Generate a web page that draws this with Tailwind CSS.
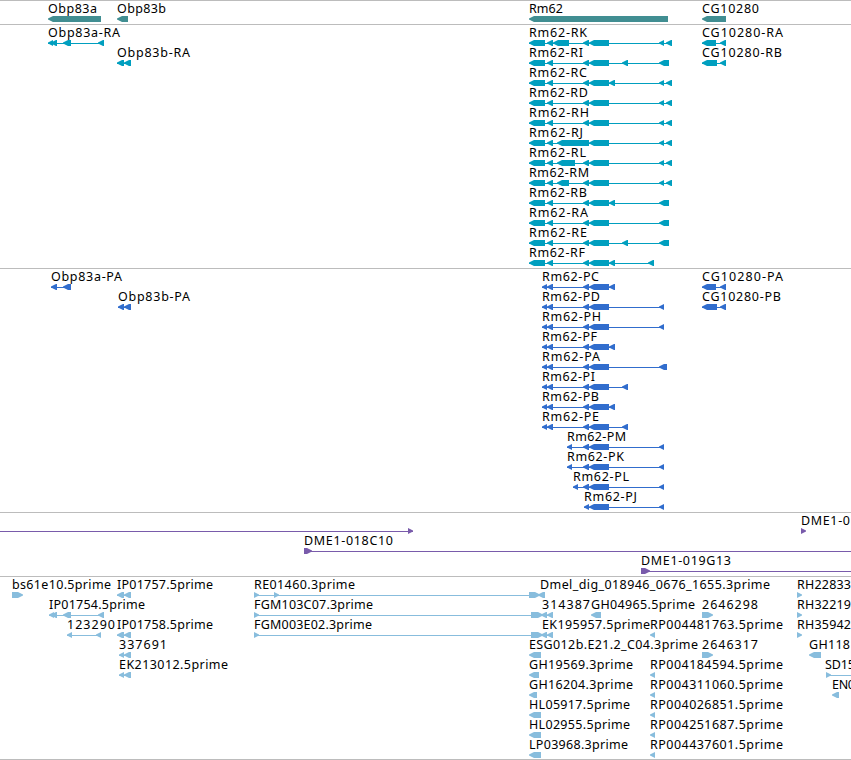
<!DOCTYPE html>
<html lang="en">
<head>
  <meta charset="UTF-8" />
  <meta name="viewport" content="width=device-width, initial-scale=1.0"/>
  <title>Genome Browser</title>
  <script src="https://cdn.jsdelivr.net/npm/@tailwindcss/browser@4"></script>
</head>
<body class="bg-white overflow-hidden">

  <main class="flex flex-col w-[851px] h-[760px] overflow-hidden border-b border-[#bcbcbc] font-['Noto_Sans','DejaVu_Sans',sans-serif] text-[12.5px] text-black">
    <!-- Genes -->
    <section class="h-6 shrink-0 border-t border-[#bcbcbc]">
      <svg id="genes" class="block w-full h-full fill-[#418e92]"></svg>
    </section>
    <!-- Transcripts -->
    <section class="h-[244px] shrink-0 border-t border-[#bcbcbc]">
      <svg id="transcripts" class="block w-full h-full fill-[#009fbf]"></svg>
    </section>
    <!-- Proteins -->
    <section class="h-[244px] shrink-0 border-t border-[#bcbcbc]">
      <svg id="proteins" class="block w-full h-full fill-[#316dcd]"></svg>
    </section>
    <!-- Clones -->
    <section class="h-16 shrink-0 border-t border-[#bcbcbc]">
      <svg id="clones" class="block w-full h-full fill-[#795bab]"></svg>
    </section>
    <!-- ESTs -->
    <section class="h-[183px] shrink-0 border-t border-[#bcbcbc]">
      <svg id="ests" class="block w-full h-full fill-[#88bddd]"></svg>
    </section>
  </main>

  <script>
    const NS = "http://www.w3.org/2000/svg";
    const ROW = 20;

    // feature: [row, label, label x, label width, blocks, strand]
    const head = [[529, 545], [547, 553]];
    const mid = [[583, 589], [589, 609]];
    const tail = [[659, 664], [666, 672]];
    const rm = (row, name, blocks, w = 58) => [row, "Rm62-" + name, 529, w, blocks, -1];
    const phead = [[542, 547], [547, 553]];
    const pm = (row, name, x, blocks, w = 57) => [row, "Rm62-" + name, x, w, blocks, -1];
    const rp = (row, num) => [row, `RP${num}.5prime`, 650, 133, [[650, 655]], -1];

    const tracks = {
      genes: [
        [0, "Obp83a", 48, 49, [[48, 101]], -1],
        [0, "Obp83b", 117, 49, [[117, 128]], -1],
        [0, "Rm62", 529, 34, [[529, 668]], -1],
        [0, "CG10280", 702, 57, [[702, 726]], -1],
      ],
      transcripts: [
        [0, "Obp83a-RA", 48, 72, [[48, 53], [51, 57], [63, 71], [98, 104]], -1],
        [1, "Obp83b-RA", 117, 73, [[117, 124], [124, 131]], -1],
        rm(0, "RK", [...head, [553, 569], ...mid, ...tail]),
        rm(1, "RI", [...head, ...mid, [622, 628], [659, 669]], 54),
        rm(2, "RC", [...head, ...mid, [609, 615], ...tail]),
        rm(3, "RD", [...head, ...mid, ...tail], 59),
        rm(4, "RH", [...head, ...mid, ...tail], 60),
        rm(5, "RJ", [...head, [557, 589], [589, 609], ...tail], 54),
        rm(6, "RL", [...head, [557, 575], ...mid, ...tail], 57),
        rm(7, "RM", [...head, [557, 569], ...mid, ...tail], 60),
        rm(8, "RB", [...head, ...mid, [609, 615], [659, 669]]),
        rm(9, "RA", [...head, ...mid, [659, 669]], 59),
        rm(10, "RE", [...head, ...mid, [622, 628], [659, 669]], 58),
        rm(11, "RF", [...head, ...mid, [609, 615], [648, 654]], 56),
        [0, "CG10280-RA", 702, 81, [[702, 716], [720, 726]], -1],
        [1, "CG10280-RB", 702, 80, [[702, 717], [720, 726]], -1],
      ],
      proteins: [
        [0, "Obp83a-PA", 51, 71, [[51, 57], [63, 71]], -1],
        [1, "Obp83b-PA", 118, 72, [[118, 124], [124, 131]], -1],
        pm(0, "PC", 542, [...phead, ...mid, [609, 615]]),
        pm(1, "PD", 542, [...phead, ...mid, [659, 664]], 58),
        pm(2, "PH", 542, [...phead, ...mid, [659, 664]], 59),
        pm(3, "PF", 542, [...phead, ...mid, [609, 615]], 55),
        pm(4, "PA", 542, [...phead, ...mid, [659, 667]], 58),
        pm(5, "PI", 542, [...phead, ...mid, [622, 628]], 53),
        pm(6, "PB", 542, [...phead, ...mid, [609, 615]]),
        pm(7, "PE", 542, [...phead, ...mid, [622, 628]]),
        pm(8, "PM", 567, [[567, 572], ...mid, [659, 664]], 59),
        pm(9, "PK", 567, [[567, 572], ...mid, [659, 664]]),
        pm(10, "PL", 573, [[573, 578], ...mid, [659, 664]], 56),
        pm(11, "PJ", 584, [[584, 589], [589, 609], [659, 664]], 53),
        [0, "CG10280-PA", 702, 81, [[702, 716], [720, 726]], -1],
        [1, "CG10280-PB", 702, 79, [[702, 717], [720, 726]], -1],
      ],
      clones: [
        [0, "", 0, 0, [[-10, 0], [408, 413]], 1],
        [1, "DME1-018C10", 304, 89, [[304, 312], [860, 870]], 1],
        [2, "DME1-019G13", 641, 90, [[641, 650], [860, 870]], 1],
        [0, "DME1-0", 801, 49, [[801, 806]], 1],
      ],
      ests: [
        [0, "bs61e10.5prime", 12, 99, [[12, 23]], 1],
        [1, "IP01754.5prime", 49, 96, [[49, 54], [51, 57], [63, 71], [98, 104]], -1],
        [2, "123290", 67, 48, [[67, 72], [96, 101]], -1],
        [0, "IP01757.5prime", 117, 96, [[117, 124], [124, 131]], -1],
        [2, "IP01758.5prime", 117, 96, [[117, 124], [124, 131]], -1],
        [3, "337691", 119, 48, [[119, 124], [124, 131]], -1],
        [4, "EK213012.5prime", 119, 109, [[119, 124], [124, 131]], -1],
        [0, "RE01460.3prime", 254, 101, [[254, 259], [274, 279], [529, 540]], 1],
        [1, "FGM103C07.3prime", 254, 119, [[254, 259], [531, 543]], 1],
        [2, "FGM003E02.3prime", 254, 118, [[254, 259], [531, 543]], 1],
        [0, "Dmel_dig_018946_0676_1655.3prime", 540, 230, [[538, 545]], -1],
        [1, "314387", 542, 48, [[541, 547], [547, 553]], -1],
        [1, "GH04965.5prime", 591, 104, [[591, 601]], -1],
        [1, "2646298", 702, 56, [[702, 713]], 1],
        [2, "EK195957.5prime", 542, 108, [[541, 547], [547, 553]], -1],
        [3, "ESG012b.E21.2_C04.3prime", 529, 169, [[529, 541]], -1],
        [3, "2646317", 702, 56, [[702, 713]], 1],
        [4, "GH19569.3prime", 529, 104, [[529, 539]], -1],
        [5, "GH16204.3prime", 529, 104, [[529, 537]], -1],
        [6, "HL05917.5prime", 529, 101, [[529, 541]], -1],
        [7, "HL02955.5prime", 529, 101, [[529, 541]], -1],
        [8, "LP03968.3prime", 529, 99, [[529, 541]], -1],
        rp(2, "004481763"),
        rp(4, "004184594"),
        rp(5, "004311060"),
        rp(6, "004026851"),
        rp(7, "004251687"),
        rp(8, "004437601"),
        [0, "RH22833", 797, 54, [[797, 802]], 1],
        [1, "RH32219", 797, 54, [[797, 802]], 1],
        [2, "RH35942", 797, 54, [[797, 802]], 1],
        [3, "GH118", 809, 41, [[809, 821]], -1],
        [4, "SD15", 825, 30, [[826, 831], [860, 866]], 1],
        [5, "EN0", 832, 23, [[832, 839]], -1],
      ],
    };

    function add(parent, tag, attrs) {
      const el = document.createElementNS(NS, tag);
      for (const k in attrs) el.setAttribute(k, attrs[k]);
      parent.appendChild(el);
      return el;
    }

    // block with its tip on the strand side
    function arrow(a, b, y, strand) {
      const t = Math.min(5, b - a);
      return strand < 0
        ? `${a},${y + 2.5} ${a + t},${y} ${b},${y} ${b},${y + 6} ${a + t},${y + 6} ${a},${y + 3.5}`
        : `${b},${y + 2.5} ${b - t},${y} ${a},${y} ${a},${y + 6} ${b - t},${y + 6} ${b},${y + 3.5}`;
    }

    for (const id in tracks) {
      const svg = document.getElementById(id);
      for (const [row, label, x, w, blocks, strand] of tracks[id]) {
        const y = row * ROW;
        const start = blocks[0][0];
        const end = blocks[blocks.length - 1][1];
        if (blocks.length > 1) {
          add(svg, "rect", { x: start, y: y + 18, width: end - start, height: 1 });
        }
        blocks.forEach(([a, b]) => add(svg, "polygon", { points: arrow(a, b, y + 15, strand) }));
        if (label) {
          const text = add(svg, "text", { x, y: y + 12, textLength: w, class: "fill-black" });
          text.textContent = label;
        }
      }
    }
  </script>
</body>
</html>
